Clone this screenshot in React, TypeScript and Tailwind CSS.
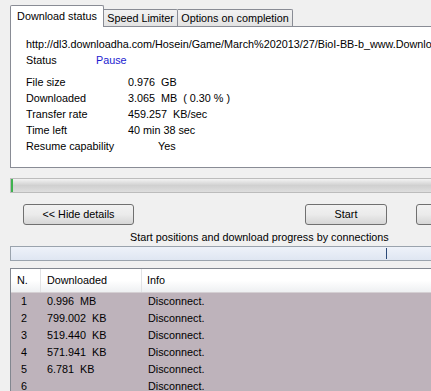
import React from "react";

const font = { fontFamily: '"Liberation Sans", Arial, sans-serif' };

const rows = [
  ["1", "0.996  MB", "Disconnect."],
  ["2", "799.002  KB", "Disconnect."],
  ["3", "519.440  KB", "Disconnect."],
  ["4", "571.941  KB", "Disconnect."],
  ["5", "6.781  KB", "Disconnect."],
  ["6", "", "Disconnect."],
];

function Btn({ children, className = "" }: { children: React.ReactNode; className?: string }) {
  return (
    <div
      className={
        "h-[21px] rounded-[3px] border border-[#707070] bg-gradient-to-b from-[#f2f2f2] via-[#ebebeb] to-[#d6d6d6] flex items-center justify-center text-black shrink-0 " +
        className
      }
    >
      {children}
    </div>
  );
}

export default function App() {
  return (
    <div
      className="w-[431px] h-[391px] overflow-hidden bg-[#f0f0f0] text-[10.8px] text-black leading-none"
      style={font}
    >
      <div className="w-[470px] pl-[10px] pt-[5px] flex flex-col">
        {/* Tabs */}
        <div className="flex items-end h-[21px] relative z-10">
          <div className="w-[94px] bg-white border-l border-t border-r border-[#898c95] flex items-center justify-center pb-[1px] mb-[-1px] h-[22px] rounded-t-[2px]">
            Download status
          </div>
          <div className="w-[74px] h-[17px] bg-gradient-to-b from-[#f2f2f2] to-[#e3e3e3] border-t border-r border-[#898c95] flex items-center justify-center rounded-tr-[2px]">
            Speed Limiter
          </div>
          <div className="w-[115px] h-[17px] bg-gradient-to-b from-[#f2f2f2] to-[#e3e3e3] border-t border-r border-[#898c95] flex items-center justify-center rounded-tr-[2px]">
            Options on completion
          </div>
        </div>
        {/* Panel */}
        <div className="h-[142px] bg-white border border-[#898c95] pl-[15px] pt-[9px] flex flex-col">
          <div className="h-[16px] flex items-center whitespace-nowrap">
            http://dl3.downloadha.com/Hosein/Game/March%202013/27/BioI-BB-b_www.Downloadha.com.part1.rar
          </div>
          <div className="h-[16px] flex items-center">
            <span className="w-[70px]">Status</span>
            <span className="text-[#1a1ad0]">Pause</span>
          </div>
          <div className="h-[6px]" />
          {[
            ["File size", "0.976  GB"],
            ["Downloaded", "3.065  MB  ( 0.30 % )"],
            ["Transfer rate", "459.257  KB/sec"],
            ["Time left", "40 min 38 sec"],
          ].map(([l, v]) => (
            <div key={l} className="h-[16px] flex items-center whitespace-pre">
              <span className="w-[102px]">{l}</span>
              <span>{v}</span>
            </div>
          ))}
          <div className="h-[16px] flex items-center">
            <span className="w-[132px]">Resume capability</span>
            <span>Yes</span>
          </div>
        </div>
        {/* Progress bar */}
        <div className="mt-[10px] h-[15px] border border-[#bcbcbc] bg-gradient-to-b from-[#f3f3f3] via-[#d0d0d0] to-[#dedede] flex">
          <div className="w-[2px] h-full bg-[#3fb24f]" />
        </div>
        {/* Buttons */}
        <div className="mt-[11px] flex items-center">
          <Btn className="ml-[13px] w-[111px]">&lt;&lt; Hide details</Btn>
          <Btn className="ml-[171px] w-[82px]">Start</Btn>
          <Btn className="ml-[29px] w-[82px]">Stop</Btn>
        </div>
        {/* Label */}
        <div className="mt-[5px] h-[14px] flex items-center pl-[120px]">
          Start positions and download progress by connections
        </div>
        {/* Connections bar */}
        <div className="mt-[2px] h-[15px] border border-[#9aa3ad] bg-gradient-to-b from-[#eef2f9] to-[#dfe6f2] relative">
          <div className="absolute left-[375px] top-[1px] bottom-[1px] w-px bg-[#2c4a78]" />
        </div>
        {/* List */}
        <div className="mt-[7px] border-l border-t border-[#828790] bg-[#beb3bb] h-[140px]">
          <div className="h-[24px] bg-gradient-to-b from-white via-white to-[#eef0f2] border-b border-[#d5d0d3] flex items-center">
            <div className="w-[30px] h-full flex items-center pl-[6px] border-r border-[#e2e3e5]">N.</div>
            <div className="w-[101px] h-full flex items-center pl-[6px] border-r border-[#e2e3e5]">Downloaded</div>
            <div className="flex-1 h-full flex items-center pl-[5px]">Info</div>
          </div>
          {rows.map(([n, d, i]) => (
            <div key={n} className="h-[17px] flex items-center whitespace-pre">
              <div className="w-[30px] pl-[10px]">{n}</div>
              <div className="w-[101px] pl-[6px]">{d}</div>
              <div className="pl-[6px]">{i}</div>
            </div>
          ))}
        </div>
      </div>
    </div>
  );
}
